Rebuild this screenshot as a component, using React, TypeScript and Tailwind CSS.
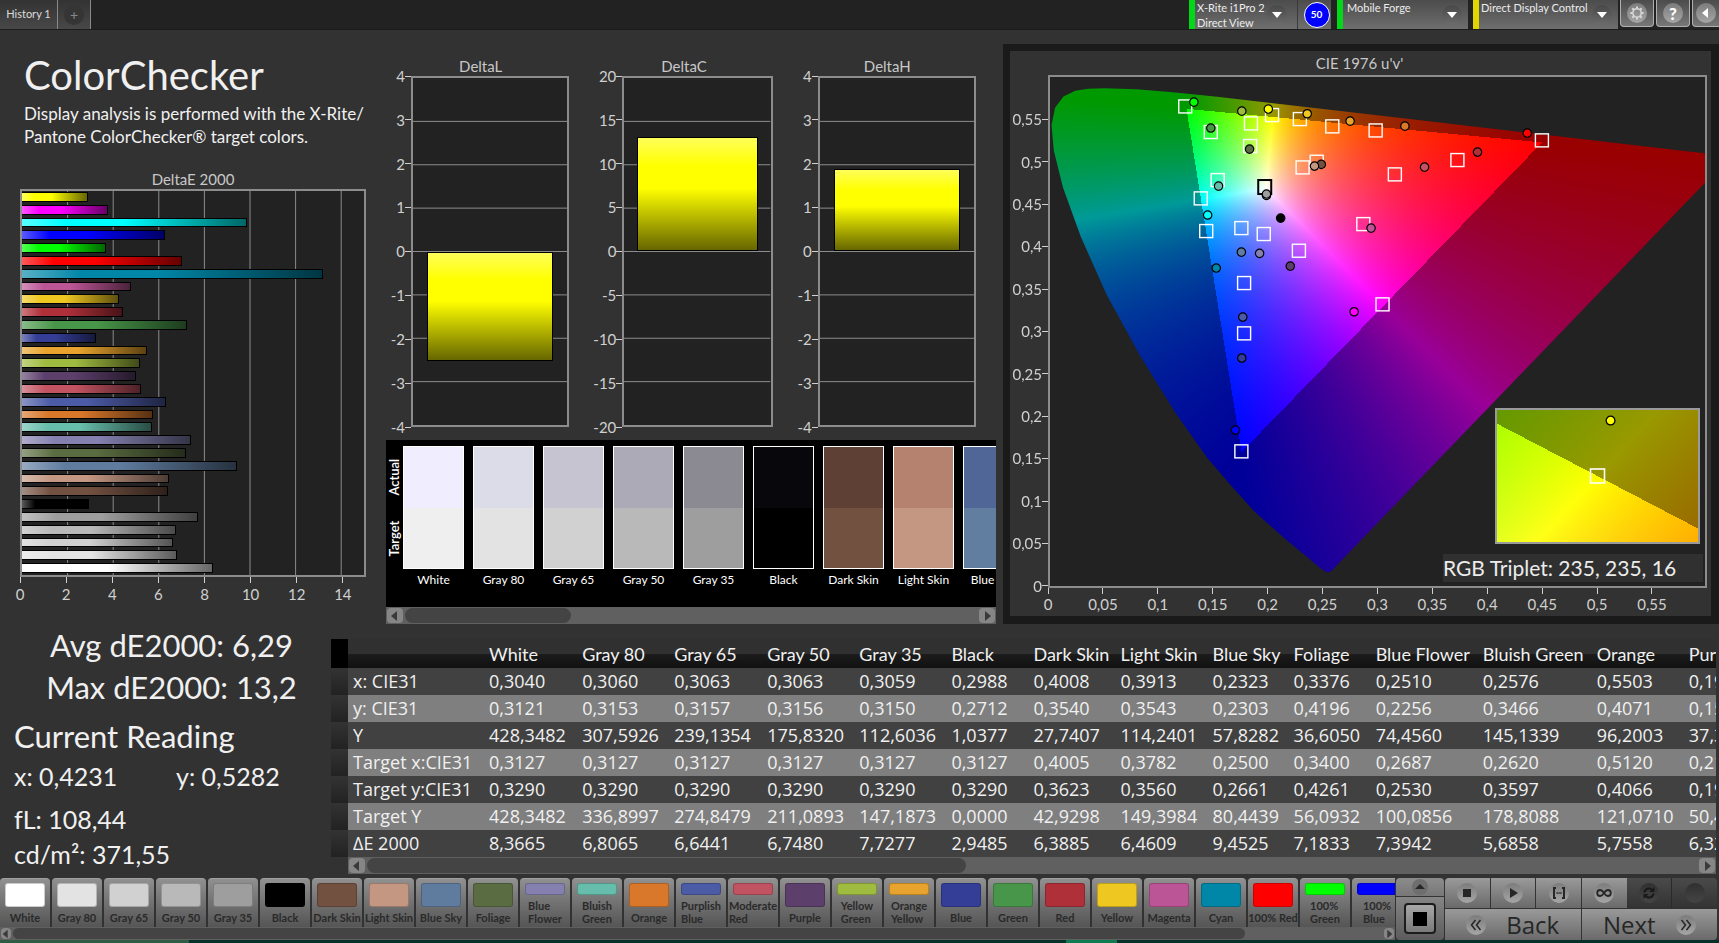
import { useEffect, useRef } from 'react'
import type { ReactNode } from 'react'

type Patch = { name: string; color: string; dE: number; lines?: string[] }

const patches: Patch[] = [
  { name: 'White', color: '#ffffff', dE: 8.37 },
  { name: 'Gray 80', color: '#e3e3e3', dE: 6.81 },
  { name: 'Gray 65', color: '#d1d1d1', dE: 6.64 },
  { name: 'Gray 50', color: '#b9b9b9', dE: 6.75 },
  { name: 'Gray 35', color: '#9e9e9e', dE: 7.73 },
  { name: 'Black', color: '#000000', dE: 2.95 },
  { name: 'Dark Skin', color: '#735141', dE: 6.39 },
  { name: 'Light Skin', color: '#c39782', dE: 6.46 },
  { name: 'Blue Sky', color: '#5f7c9f', dE: 9.45 },
  { name: 'Foliage', color: '#5a6c41', dE: 7.18 },
  { name: 'Blue Flower', color: '#8480af', dE: 7.42, lines: ['Blue', 'Flower'] },
  { name: 'Bluish Green', color: '#67bdab', dE: 5.69, lines: ['Bluish', 'Green'] },
  { name: 'Orange', color: '#d9782b', dE: 5.76 },
  { name: 'Purplish Blue', color: '#4c5ba5', dE: 6.3, lines: ['Purplish', 'Blue'] },
  { name: 'Moderate Red', color: '#c25362', dE: 5.22, lines: ['Moderate', 'Red'] },
  { name: 'Purple', color: '#5d3f6c', dE: 5.0 },
  { name: 'Yellow Green', color: '#a0bc40', dE: 5.17, lines: ['Yellow', 'Green'] },
  { name: 'Orange Yellow', color: '#e7a32d', dE: 5.48, lines: ['Orange', 'Yellow'] },
  { name: 'Blue', color: '#343e97', dE: 3.26 },
  { name: 'Green', color: '#489649', dE: 7.25 },
  { name: 'Red', color: '#b0303a', dE: 4.43 },
  { name: 'Yellow', color: '#eec721', dE: 4.26 },
  { name: 'Magenta', color: '#bc5595', dE: 4.79 },
  { name: 'Cyan', color: '#0086a7', dE: 13.2 },
  { name: '100% Red', color: '#ff0000', dE: 7.0 },
  { name: '100% Green', color: '#00ff00', dE: 3.7, lines: ['100%', 'Green'] },
  { name: '100% Blue', color: '#0000ff', dE: 6.26, lines: ['100%', 'Blue'] },
  { name: '100% Cyan', color: '#00ffff', dE: 9.85 },
  { name: '100% Magenta', color: '#ff00ff', dE: 3.77 },
  { name: '100% Yellow', color: '#ffff00', dE: 2.88 },
]

const comparisons = [
  { name: 'White', actual: '#f0edff', target: '#efefef' },
  { name: 'Gray 80', actual: '#dcdbe8', target: '#e3e3e3' },
  { name: 'Gray 65', actual: '#c5c4d0', target: '#d1d1d1' },
  { name: 'Gray 50', actual: '#abaab6', target: '#b9b9b9' },
  { name: 'Gray 35', actual: '#8b8a93', target: '#9e9e9e' },
  { name: 'Black', actual: '#08070b', target: '#000000' },
  { name: 'Dark Skin', actual: '#5e4035', target: '#735141' },
  { name: 'Light Skin', actual: '#b4826f', target: '#c39782' },
  { name: 'Blue Sky', actual: '#4f6697', target: '#617d9f' },
]

const tableColumns = [
  { name: 'White', width: 93 },
  { name: 'Gray 80', width: 92 },
  { name: 'Gray 65', width: 93 },
  { name: 'Gray 50', width: 92 },
  { name: 'Gray 35', width: 92 },
  { name: 'Black', width: 82 },
  { name: 'Dark Skin', width: 87 },
  { name: 'Light Skin', width: 92 },
  { name: 'Blue Sky', width: 81 },
  { name: 'Foliage', width: 82 },
  { name: 'Blue Flower', width: 107 },
  { name: 'Bluish Green', width: 114 },
  { name: 'Orange', width: 92 },
  { name: 'Purplish Blue', width: 120 },
]

const tableRows = [
  { label: 'x: CIE31', values: ['0,3040', '0,3060', '0,3063', '0,3063', '0,3059', '0,2988', '0,4008', '0,3913', '0,2323', '0,3376', '0,2510', '0,2576', '0,5503', '0,1961'] },
  { label: 'y: CIE31', values: ['0,3121', '0,3153', '0,3157', '0,3156', '0,3150', '0,2712', '0,3540', '0,3543', '0,2303', '0,4196', '0,2256', '0,3466', '0,4071', '0,1567'] },
  { label: 'Y', values: ['428,3482', '307,5926', '239,1354', '175,8320', '112,6036', '1,0377', '27,7407', '114,2401', '57,8282', '36,6050', '74,4560', '145,1339', '96,2003', '37,3412'] },
  { label: 'Target x:CIE31', values: ['0,3127', '0,3127', '0,3127', '0,3127', '0,3127', '0,3127', '0,4005', '0,3782', '0,2500', '0,3400', '0,2687', '0,2620', '0,5120', '0,2145'] },
  { label: 'Target y:CIE31', values: ['0,3290', '0,3290', '0,3290', '0,3290', '0,3290', '0,3290', '0,3623', '0,3560', '0,2661', '0,4261', '0,2530', '0,3597', '0,4066', '0,1909'] },
  { label: 'Target Y', values: ['428,3482', '336,8997', '274,8479', '211,0893', '147,1873', '0,0000', '42,9298', '149,3984', '80,4439', '56,0932', '100,0856', '178,8088', '121,0710', '50,4471'] },
  { label: 'ΔE 2000', values: ['8,3665', '6,8065', '6,6441', '6,7480', '7,7277', '2,9485', '6,3885', '6,4609', '9,4525', '7,1833', '7,3942', '5,6858', '5,7558', '6,3287'] },
]

// u'v' of every patch: squares are the targets, dots the readings
const targets = [
  [0.1239, 0.5653], [0.1841, 0.5453], [0.2034, 0.5551], [0.2289, 0.5504], [0.2586, 0.5418],
  [0.2983, 0.537], [0.4506, 0.5253], [0.1473, 0.5351], [0.1833, 0.5186], [0.2443, 0.5001],
  [0.2314, 0.4934], [0.3159, 0.4852], [0.3732, 0.5021], [0.1536, 0.4785], [0.1381, 0.4569],
  [0.1431, 0.4184], [0.1753, 0.4219], [0.1958, 0.4149], [0.228, 0.3952], [0.287, 0.4266],
  [0.3046, 0.332], [0.1778, 0.3571], [0.1778, 0.2978], [0.1753, 0.1587],
]

const readings: [number, number, string][] = [
  [0.1318, 0.5704, '#00ff00'], [0.1757, 0.5598, '#a0bc40'], [0.2, 0.5622, '#ffff00'],
  [0.2356, 0.5567, '#eec721'], [0.2749, 0.548, '#e7a32d'], [0.3251, 0.5421, '#d9782b'],
  [0.4372, 0.5339, '#ff0000'], [0.1473, 0.5398, '#489649'], [0.1828, 0.515, '#5a6c41'],
  [0.1544, 0.4714, '#67bdab'], [0.1444, 0.4373, '#00ffff'], [0.2485, 0.497, '#735141'],
  [0.2423, 0.495, '#c39782'], [0.3431, 0.4938, '#c25362'], [0.3916, 0.5115, '#b0303a'],
  [0.1983, 0.4604, '#e3e3e3'], [0.1983, 0.462, '#9e9e9e'], [0.2113, 0.4337, '#000000'],
  [0.1753, 0.3936, '#617d9f'], [0.192, 0.3921, '#8480af'], [0.2201, 0.3771, '#5d3f6c'],
  [0.1523, 0.3748, '#0086a7'], [0.2941, 0.4219, '#bc5595'], [0.2786, 0.3233, '#ff00ff'],
  [0.1766, 0.317, '#4c5ba5'], [0.1757, 0.2687, '#343e97'], [0.1699, 0.1838, '#0000ff'],
]

const locus = [
  [0.2568, 0.0166], [0.2522, 0.0169], [0.2461, 0.0226], [0.2347, 0.035], [0.2161, 0.0549],
  [0.1877, 0.0871], [0.1668, 0.117], [0.1441, 0.151], [0.1147, 0.2044], [0.0828, 0.2708],
  [0.0521, 0.3427], [0.0282, 0.4117], [0.0119, 0.4698], [0.0035, 0.5131], [0.0014, 0.5432],
  [0.0046, 0.5638], [0.0123, 0.577], [0.0231, 0.5837], [0.035, 0.5862], [0.0501, 0.5868],
  [0.0792, 0.5856], [0.1127, 0.5821], [0.1531, 0.5766], [0.2026, 0.5694], [0.2623, 0.5604],
  [0.3315, 0.5501], [0.4035, 0.5393], [0.4692, 0.5296], [0.5203, 0.5219], [0.583, 0.5125],
  [0.6234, 0.5065],
]

const U_MAX = 0.6
const V_MAX = 0.6

const pctX = (u: number) => `${(u / U_MAX) * 100}%`
const pctY = (v: number) => `${(1 - v / V_MAX) * 100}%`

// Brightest linear RGB of a chromaticity, dimmed outside Rec.709
function chromaColor(x: number, y: number) {
  const X = x / y
  const Z = (1 - x - y) / y
  const rgb = [
    3.2406 * X - 1.5372 - 0.4986 * Z,
    -0.9689 * X + 1.8758 + 0.0415 * Z,
    0.0557 * X - 0.204 + 1.057 * Z,
  ]
  const dim = Math.min(...rgb) < 0 ? 0.6 : 1
  const max = Math.max(...rgb)
  return rgb.map((c) => (Math.max(c, 0) / max) * 255 * dim)
}

type Range = { x0: number; x1: number; y0: number; y1: number; uv: boolean }

const uvRange: Range = { x0: 0, x1: U_MAX, y0: 0, y1: V_MAX, uv: true }
const insetRange: Range = { x0: 0.3913, x1: 0.4473, y0: 0.4773, y1: 0.5333, uv: false }

function ChromaCanvas({ width, height, range }: { width: number; height: number; range: Range }) {
  const ref = useRef<HTMLCanvasElement>(null)

  useEffect(() => {
    const ctx = ref.current?.getContext('2d')
    if (!ctx) return
    const image = ctx.createImageData(width, height)
    for (let j = 0; j < height; j++) {
      for (let i = 0; i < width; i++) {
        let x = range.x0 + ((i + 0.5) / width) * (range.x1 - range.x0)
        let y = range.y1 - ((j + 0.5) / height) * (range.y1 - range.y0)
        if (range.uv) {
          const d = 6 * x - 16 * y + 12
          const u = x
          x = (9 * u) / d
          y = (4 * y) / d
        }
        const [r, g, b] = chromaColor(x, y)
        image.data.set([r, g, b, 255], (j * width + i) * 4)
      }
    }
    ctx.putImageData(image, 0, 0)

    if (range.uv) {
      ctx.globalCompositeOperation = 'destination-in'
      ctx.beginPath()
      locus.forEach(([u, v]) => ctx.lineTo((u / U_MAX) * width, (1 - v / V_MAX) * height))
      ctx.closePath()
      ctx.fill()
    }
  }, [width, height, range])

  return <canvas ref={ref} width={width} height={height} className="block w-full h-full" />
}

function Arrow({ dir }: { dir: 'left' | 'right' | 'up' | 'down' }) {
  const points = {
    left: '8,1 8,11 2,6',
    right: '4,1 4,11 10,6',
    up: '1,8 11,8 6,3',
    down: '1,3 11,3 6,9',
  }
  return (
    <svg viewBox="0 0 12 12" className="w-3 h-3" fill="currentColor" aria-hidden="true">
      <polygon points={points[dir]} />
    </svg>
  )
}

function Scrollbar({ size, slim }: { size: number; slim?: boolean }) {
  return (
    <div className={`flex items-center bg-[#606060] px-px ${slim ? 'h-[13px]' : 'h-[17px]'}`}>
      <button aria-label="Scroll left"
        className={`flex items-center justify-center rounded-sm bg-[#868686] text-[#3a3a3a] ${slim ? 'w-[10px] h-[11px]' : 'w-4 h-[15px]'}`}>
        <Arrow dir="left" />
      </button>
      <div className="flex-1 h-full py-px px-0.5">
        <div className="h-full rounded-full bg-[#444]" style={{ width: `${size}%` }} />
      </div>
      <button aria-label="Scroll right"
        className={`flex items-center justify-center rounded-sm bg-[#868686] text-[#3a3a3a] ${slim ? 'w-[10px] h-[11px]' : 'w-4 h-[15px]'}`}>
        <Arrow dir="right" />
      </button>
    </div>
  )
}

function Knob({ children, dark }: { children?: ReactNode; dark?: boolean }) {
  return (
    <span className={`flex items-center justify-center w-5 h-5 rounded-full flex-shrink-0
                      ${dark ? 'bg-linear-to-b from-[#303030] to-[#454545]' : 'bg-linear-to-b from-[#7c7c7c] to-[#a6a6a6]'}`}>
      {children}
    </span>
  )
}

function DropKnob() {
  return (
    <span className="flex items-center justify-center w-5 h-5 rounded-full flex-shrink-0 text-white
                     bg-linear-to-b from-[#484848] to-[#6c6c6c] pointer-events-none">
      <Arrow dir="down" />
    </span>
  )
}

function TopBar() {
  return (
    <header className="flex justify-between h-[30px] bg-[#222] border-b border-[#1c1c1c] overflow-hidden">
      <div role="tablist" className="flex">
        <button role="tab" aria-selected="true"
          className="w-[58px] border-r border-[#8a8a8a] bg-linear-to-b from-[#333] to-[#484848] text-[11px] text-[#dcdcdc]">
          History 1
        </button>
        <button aria-label="Add history"
          className="flex items-center justify-center w-[33px] border-r border-[#8a8a8a] bg-linear-to-b from-[#333] to-[#484848]">
          <span className="flex items-center justify-center w-5 h-5 rounded-full bg-[#353535] text-[#888] text-sm">+</span>
        </button>
      </div>

      <div className="flex text-[11px] leading-[15px] text-[#ececec]">
        <button className="flex w-[108px] border-l-[6px] border-[#00d818] bg-linear-to-b from-[#4c4c4c] to-[#6e6e6e] pl-0.5 pr-2.5 text-left">
          <span className="flex-1 whitespace-nowrap">X-Rite i1Pro 2<br />Direct View</span>
          <span className="self-center"><DropKnob /></span>
        </button>
        <div className="flex items-center justify-center w-[34px] mr-[6px] pl-1 border-l border-[#3a3a3a] bg-linear-to-b from-[#4c4c4c] to-[#6e6e6e]">
          <span className="flex items-center justify-center w-[26px] h-[26px] rounded-full border border-white bg-[#0000ff]
                           text-[10px] font-bold text-white flex-shrink-0">50</span>
        </div>
        <label className="flex items-center w-[131px] mr-[5px] border-l-[6px] border-[#00d818] bg-linear-to-b from-[#4c4c4c] to-[#6e6e6e] pl-1 pr-1.5">
          <select aria-label="Pattern source" className="flex-1 min-w-0 self-start appearance-none outline-none">
            <option>Mobile Forge</option>
          </select>
          <DropKnob />
        </label>
        <label className="flex items-center w-[145px] mr-0.5 border-l-[6px] border-[#e2d600] bg-linear-to-b from-[#4c4c4c] to-[#6e6e6e] pl-0.5 pr-1.5">
          <select aria-label="Display control" className="flex-1 min-w-0 self-start appearance-none outline-none">
            <option>Direct Display Control</option>
          </select>
          <DropKnob />
        </label>
        <div className="flex h-[27px] gap-0.5">
          <button aria-label="Settings"
            className="flex items-center justify-center w-[34px] rounded-b border border-t-0 border-[#b0b0b0] bg-linear-to-b from-[#4c4c4c] to-[#777]">
            <Knob>
              <svg viewBox="0 0 16 16" className="w-4 h-4" stroke="#d8d8d8" fill="none" aria-hidden="true">
                <circle cx="8" cy="8" r="4.2" strokeWidth="1.5" />
                <path strokeWidth="2" d="M8 1.4v2M8 12.6v2M1.4 8h2M12.6 8h2M3.3 3.3l1.500 1.500M11.200 11.200l1.500 1.500M3.300 12.700l1.500-1.500M11.200 4.800l1.500-1.500" />
              </svg>
            </Knob>
          </button>
          <button aria-label="Help"
            className="flex items-center justify-center w-[34px] rounded-b border border-t-0 border-[#b0b0b0] bg-linear-to-b from-[#4c4c4c] to-[#777]">
            <Knob><span className="text-[17px] font-black text-white">?</span></Knob>
          </button>
          <button aria-label="Collapse"
            className="flex items-center justify-center w-[27px] rounded-bl border border-t-0 border-r-0 border-[#b0b0b0] bg-linear-to-b from-[#4c4c4c] to-[#777] text-white">
            <Knob><Arrow dir="left" /></Knob>
          </button>
        </div>
      </div>
    </header>
  )
}

function DeltaEChart() {
  const ticks = [0, 2, 4, 6, 8, 10, 12, 14]
  return (
    <figure className="ml-5 mr-5">
      <figcaption className="text-center text-[15px] leading-5 text-[#c8c8c8]">DeltaE 2000</figcaption>
      <div className="relative flex flex-col h-[388px] border-2 border-[#8c8c8c] bg-[#222]">
        <svg className="absolute inset-0 w-full h-full" aria-hidden="true">
          {ticks.slice(1).map((t) => (
            <line key={t} x1={`${(t / 15) * 100}%`} x2={`${(t / 15) * 100}%`} y1="0" y2="100%" stroke="#8c8c8c" strokeWidth="1" />
          ))}
        </svg>
        {[...patches].reverse().map((p) => (
          <div key={p.name} className="relative flex-1 pt-px pb-0.5">
            <div className="h-full border border-l-0 border-black bg-[linear-gradient(to_right,rgba(255,255,255,0.35),transparent_20%,transparent_45%,rgba(0,0,0,0.6))]"
              style={{ width: `${(p.dE / 15) * 100}%`, backgroundColor: p.color }} />
          </div>
        ))}
      </div>
      <div className="flex justify-between" style={{ width: `${(14 / 15) * 100}%` }}>
        {ticks.map((t) => (
          <div key={t} className="flex flex-col items-center w-0">
            <span className="w-px h-[6px] bg-[#d0d0d0]" />
            <span className="text-[15px] leading-[22px] text-[#d0d0d0]">{t}</span>
          </div>
        ))}
      </div>
    </figure>
  )
}

function DeltaChart({ title, max, step, value }: { title: string; max: number; step: number; value: number }) {
  const ticks: number[] = []
  for (let t = max; t >= -max; t -= step) ticks.push(t)
  const top = value > 0 ? 50 - (value / max) * 50 : 50
  return (
    <figure className="flex-1">
      <figcaption className="text-center text-[15px] leading-5 text-[#c8c8c8]">{title}</figcaption>
      <div className="flex h-[351px]">
        <div className={`flex flex-col justify-between ${max > 9 ? 'w-[27px]' : 'w-[19px]'}`}>
          {ticks.map((t) => (
            <div key={t} className="flex items-center justify-end h-0">
              <span className="text-[15px] text-[#d0d0d0]">{t}</span>
              <span className="w-[6px] h-px bg-[#d0d0d0] flex-shrink-0" />
            </div>
          ))}
        </div>
        <div className="relative flex-1 border-2 border-[#8c8c8c] bg-[#222]">
          <svg className="absolute inset-0 w-full h-full" aria-hidden="true">
            {ticks.slice(1, -1).map((t) => (
              <line key={t} x1="0" x2="100%" y1={`${50 - (t / max) * 50}%`} y2={`${50 - (t / max) * 50}%`} stroke="#8c8c8c" strokeWidth="1" />
            ))}
          </svg>
          <div className="absolute inset-x-[9%] border border-black bg-[#ffff00] bg-[linear-gradient(to_bottom,rgba(255,255,255,0.35),transparent_25%,transparent_45%,rgba(0,0,0,0.6))]"
            style={{ top: `${top}%`, height: `${(Math.abs(value) / max) * 50}%` }} />
        </div>
      </div>
    </figure>
  )
}

function ComparisonStrip() {
  return (
    <div className="mt-[13px] mr-[7px]">
      <div className="flex h-[167px] pt-1.5 bg-black overflow-hidden text-white">
        <div className="flex flex-col w-[17px] h-[123px] flex-shrink-0 text-[13px] leading-[17px] font-semibold">
          <span className="flex-1 text-center rotate-180 [writing-mode:vertical-rl]">Actual</span>
          <span className="flex-1 text-center rotate-180 [writing-mode:vertical-rl]">Target</span>
        </div>
        {comparisons.map((c) => (
          <div key={c.name} className="w-[70px] flex-shrink-0">
            <div className="flex flex-col w-[61px] h-[123px] border border-white">
              <div className="flex-1" style={{ backgroundColor: c.actual }} />
              <div className="flex-1" style={{ backgroundColor: c.target }} />
            </div>
            <p className="w-[61px] text-center text-[12px] leading-[22px] whitespace-nowrap">{c.name}</p>
          </div>
        ))}
      </div>
      <Scrollbar size={29} />
    </div>
  )
}

function CiePanel() {
  const uTicks = ['0', '0,05', '0,1', '0,15', '0,2', '0,25', '0,3', '0,35', '0,4', '0,45', '0,5', '0,55']
  return (
    <section className="mt-[14px] border-7 border-r-8 border-b-8 border-[#1a1a1a] pl-[38px] pr-1">
      <h2 className="text-center text-[15px] leading-6 text-[#c8c8c8] pr-9">CIE 1976 u'v'</h2>
      <div className="relative h-[513px] border-2 border-[#8c8c8c] bg-[#222]">
        <ChromaCanvas width={655} height={509} range={uvRange} />

        <svg className="absolute inset-0 w-full h-full" aria-hidden="true">
          {targets.map(([u, v], i) => (
            <svg key={i} x={pctX(u)} y={pctY(v)} overflow="visible">
              <rect x="-6.5" y="-6.5" width="13" height="13" fill="none" stroke="#fff" strokeWidth="1.4" />
            </svg>
          ))}
          <svg x={pctX(0.1967)} y={pctY(0.4703)} overflow="visible">
            <rect x="-6.5" y="-7" width="13" height="14" fill="none" stroke="#000" strokeWidth="2" />
          </svg>
          {readings.map(([u, v, color], i) => (
            <svg key={i} x={pctX(u)} y={pctY(v)} overflow="visible">
              <circle r="4.2" fill={color} stroke="#000" strokeWidth="1.2" />
            </svg>
          ))}
        </svg>

        {/* v' axis, hung outside the left edge */}
        <div className="absolute right-full bottom-0 flex flex-col-reverse justify-between mr-0.5"
          style={{ height: `${(0.55 / V_MAX) * 100}%` }}>
          {uTicks.map((t) => (
            <div key={t} className="flex items-center justify-end h-0">
              <span className="text-[15px] text-[#d0d0d0]">{t}</span>
              <span className="w-[6px] h-px bg-[#d0d0d0]" />
            </div>
          ))}
        </div>

        {/* Magnified view of the current patch */}
        <div className="absolute right-[5px] bottom-[42px] w-[205px] h-[136px] border-2 border-[#9a9a9a]">
          <ChromaCanvas width={201} height={132} range={insetRange} />
          <svg className="absolute inset-0 w-full h-full" aria-hidden="true">
            <svg x="50%" y="50%" overflow="visible">
              <rect x="-7" y="-7" width="14" height="14" fill="none" stroke="#fff" strokeWidth="1.6" />
            </svg>
            <svg x="56.5%" y="8%" overflow="visible">
              <circle r="4.4" fill="#ffff00" stroke="#000" strokeWidth="1.3" />
            </svg>
          </svg>
        </div>
        <p className="absolute right-0.5 bottom-1 w-[260px] bg-[#303030] text-[21px] leading-7 text-[#ececec] whitespace-nowrap">
          RGB Triplet: 235, 235, 16
        </p>
      </div>
      <div className="flex justify-between h-[28px]" style={{ width: `${(0.55 / U_MAX) * 100}%` }}>
        {uTicks.map((t) => (
          <div key={t} className="flex flex-col items-center w-0">
            <span className="w-px h-[6px] bg-[#d0d0d0]" />
            <span className="text-[15px] leading-5 text-[#d0d0d0]">{t}</span>
          </div>
        ))}
      </div>
    </section>
  )
}

function Readings() {
  return (
    <section className="w-[331px] flex-shrink-0 text-[#f0f0f0]">
      <div className="pl-3 text-center text-[31px] leading-[42px]">
        <p>Avg dE2000: 6,29</p>
        <p>Max dE2000: 13,2</p>
      </div>
      <div className="pl-3.5">
        <h2 className="mt-1 text-[31px] leading-[48px]">Current Reading</h2>
        <div className="flex text-[25px] leading-8">
          <p className="w-[162px]">x: 0,4231</p>
          <p>y: 0,5282</p>
        </div>
        <p className="mt-[11px] text-[25px] leading-8">fL: 108,44</p>
        <p className="mt-[3px] text-[25px] leading-8">cd/m²: 371,55</p>
      </div>
    </section>
  )
}

function DataTable() {
  return (
    <section className="flex-1 min-w-0 mt-[15px] mr-[3px]">
      <div className="overflow-hidden">
        <table className="table-fixed border-collapse w-[1473px] text-left whitespace-nowrap text-[#f0f0f0]">
          <colgroup>
            <col className="w-[17px]" />
            <col className="w-[136px]" />
            {tableColumns.map((c) => <col key={c.name} style={{ width: c.width }} />)}
          </colgroup>
          <thead>
            <tr className="h-[29px] bg-[linear-gradient(to_bottom,#303030_50%,#1c1c1c_50%,#111)] text-[18px]">
              <td className="bg-black" />
              <td />
              {tableColumns.map((c) => <th key={c.name} scope="col" className="pl-[5px] p-0 font-normal leading-6">{c.name}</th>)}
            </tr>
          </thead>
          <tbody className="font-['Open_Sans',sans-serif] text-[18px] leading-[27px]">
            {tableRows.map((row, i) => (
              <tr key={row.label} className={`h-[27px] ${i % 2 ? 'bg-[#7f7f7f]' : 'bg-[#414141]'}`}>
                <td className="bg-linear-to-b from-[#333] to-[#222]" />
                <th scope="row" className="p-0 pl-[5px] font-normal">{row.label}</th>
                {row.values.map((v, j) => <td key={j} className="p-0 pl-[5px]">{v}</td>)}
              </tr>
            ))}
          </tbody>
        </table>
      </div>
      <div className="ml-[17px]">
        <Scrollbar size={45} />
      </div>
    </section>
  )
}

function PatchButton({ patch }: { patch: Patch }) {
  return (
    <button className="flex flex-col items-center w-[50px] h-[49px] mr-0.5 pt-1 flex-shrink-0 rounded-t border-t border-[#a0a0a0]
                       bg-linear-to-b from-[#909090] to-[#555] text-[11px] leading-[13px] font-bold text-[#2a2a2a] whitespace-nowrap">
      <span className={`w-10 mb-1 rounded-[3px] border border-black/20 flex-shrink-0 ${patch.lines ? 'h-3' : 'h-6'}`}
        style={{ backgroundColor: patch.color }} />
      {patch.lines
        ? <span className="text-left">{patch.lines[0]}<br />{patch.lines[1]}</span>
        : <span>{patch.name}</span>}
    </button>
  )
}

function DoubleChevron({ flip }: { flip?: boolean }) {
  return (
    <svg viewBox="0 0 12 12" className="w-3 h-3" stroke="currentColor" strokeWidth="1.5" fill="none" aria-hidden="true">
      <path d={flip ? 'M1.5 1l4 5-4 5M6.5 1l4 5-4 5' : 'M5.5 1l-4 5 4 5M10.5 1l-4 5 4 5'} />
    </svg>
  )
}

function Controls() {
  const btn = 'flex items-center justify-center flex-1 bg-linear-to-b from-[#9a9a9a] to-[#6a6a6a] border-[#333]'
  const off = 'flex items-center justify-center flex-1 bg-linear-to-b from-[#4a4a4a] to-[#333] border-[#2a2a2a]'
  return (
    <div className="flex h-[62px] mr-0.5 text-[#262626]">
      <div className="flex flex-col w-12 mx-px">
        <button aria-label="Expand" className="flex items-center justify-center h-[19px] rounded-t border-b border-[#333] bg-linear-to-b from-[#8c8c8c] to-[#777]">
          <span className="flex items-center justify-center w-4 h-4 rounded-full bg-[#6e6e6e]"><Arrow dir="up" /></span>
        </button>
        <button aria-label="Stop" className="flex items-center justify-center flex-1 rounded-b bg-linear-to-b from-[#858585] to-[#5c5c5c]">
          <span className="flex items-center justify-center w-8 h-[31px] rounded border-2 border-[#1c1c1c] bg-linear-to-b from-[#a8a8a8] to-[#7a7a7a]">
            <span className="w-[14px] h-[14px] bg-black" />
          </span>
        </button>
      </div>
      <div className="flex flex-col w-[272px] gap-px">
        <div className="flex h-[30px] rounded-t overflow-hidden">
          <button aria-label="Stop measuring" className={`${btn} border-r`}>
            <Knob><span className="w-2 h-2 bg-[#262626]" /></Knob>
          </button>
          <button aria-label="Measure" className={`${btn} border-r`}>
            <Knob>
              <svg viewBox="0 0 12 12" className="w-3 h-3" fill="currentColor" aria-hidden="true"><polygon points="3,1 11,6 3,11" /></svg>
            </Knob>
          </button>
          <button aria-label="Measure series" className={`${btn} border-r`}>
            <Knob>
              <svg viewBox="0 0 14 12" className="w-[14px] h-3" stroke="currentColor" strokeWidth="2" fill="none" aria-hidden="true">
                <path d="M4 1H2v10h2M10 1h2v10h-2" />
                <path strokeWidth="1.6" d="M4.4 6h1.4M6.3 6h1.4M8.2 6h1.4" />
              </svg>
            </Knob>
          </button>
          <button aria-label="Measure continuously" className={btn}>
            <Knob>
              <svg viewBox="0 0 16 10" className="w-4 h-[10px]" stroke="currentColor" strokeWidth="1.8" fill="none" aria-hidden="true">
                <path d="M8 5C6.5 2.7 5.4 2 4.2 2a3 3 0 000 6C5.4 8 6.5 7.3 8 5s2.6-3 3.8-3a3 3 0 010 6C10.6 8 9.5 7.3 8 5z" />
              </svg>
            </Knob>
          </button>
          <button aria-label="Refresh" disabled className={`${off} border-r`}>
            <Knob dark>
              <svg viewBox="0 0 14 14" className="w-[14px] h-[14px]" stroke="#191919" strokeWidth="2" fill="none" aria-hidden="true">
                <path d="M2.5 6.5a4.5 4.5 0 017.6-2.8M11.5 7.5a4.5 4.5 0 01-7.6 2.8" />
                <path fill="#191919" strokeWidth="0" d="M12.5 1v5h-5zM1.5 13V8h5z" />
              </svg>
            </Knob>
          </button>
          <button aria-label="Record" disabled className={off}>
            <Knob dark />
          </button>
        </div>
        <div className="flex flex-1 font-['Open_Sans',sans-serif] text-[24px] leading-none font-medium">
          <button className={`${btn} gap-5 border-r`}>
            <Knob><DoubleChevron /></Knob>
            Back
          </button>
          <button className={`${btn} gap-5 rounded-br`}>
            Next
            <Knob><DoubleChevron flip /></Knob>
          </button>
        </div>
      </div>
    </div>
  )
}

export default function App() {
  return (
    <div className="flex flex-col min-h-screen overflow-hidden bg-[#323232] font-['Lato',sans-serif]">
      <TopBar />

      <main className="flex-1">
        <div className="grid grid-cols-[386fr_617fr_716fr]">
          <section className="min-w-0 pt-[21px]">
            <h1 className="pl-6 text-[40px] leading-[48px] text-[#f0f0f0]">ColorChecker</h1>
            <p className="mt-[3px] mb-[21px] pl-6 text-[17px] leading-[23px] text-[#f0f0f0] whitespace-nowrap">
              Display analysis is performed with the X-Rite/<br />
              Pantone ColorChecker® target colors.
            </p>
            <DeltaEChart />
          </section>

          <section className="min-w-0 pt-[26px]">
            <div className="flex gap-[26px] pl-1.5 pr-[27px]">
              <DeltaChart title="DeltaL" max={4} step={1} value={-2.53} />
              <DeltaChart title="DeltaC" max={20} step={5} value={13.25} />
              <DeltaChart title="DeltaH" max={4} step={1} value={1.9} />
            </div>
            <ComparisonStrip />
          </section>

          <CiePanel />
        </div>

        <div className="flex">
          <Readings />
          <DataTable />
        </div>
      </main>

      <footer>
        <div className="flex">
          <div className="flex-1 min-w-0">
            <div className="flex overflow-hidden">
              {patches.map((p) => <PatchButton key={p.name} patch={p} />)}
            </div>
            <Scrollbar size={90} slim />
          </div>
          <Controls />
        </div>
        <div className="flex h-[3px] bg-[#06302a]">
          <span className="w-[11%] bg-[#2f5c45]" />
          <span className="w-[3%] ml-[51%] bg-[#0b7d50]" />
        </div>
      </footer>
    </div>
  )
}
